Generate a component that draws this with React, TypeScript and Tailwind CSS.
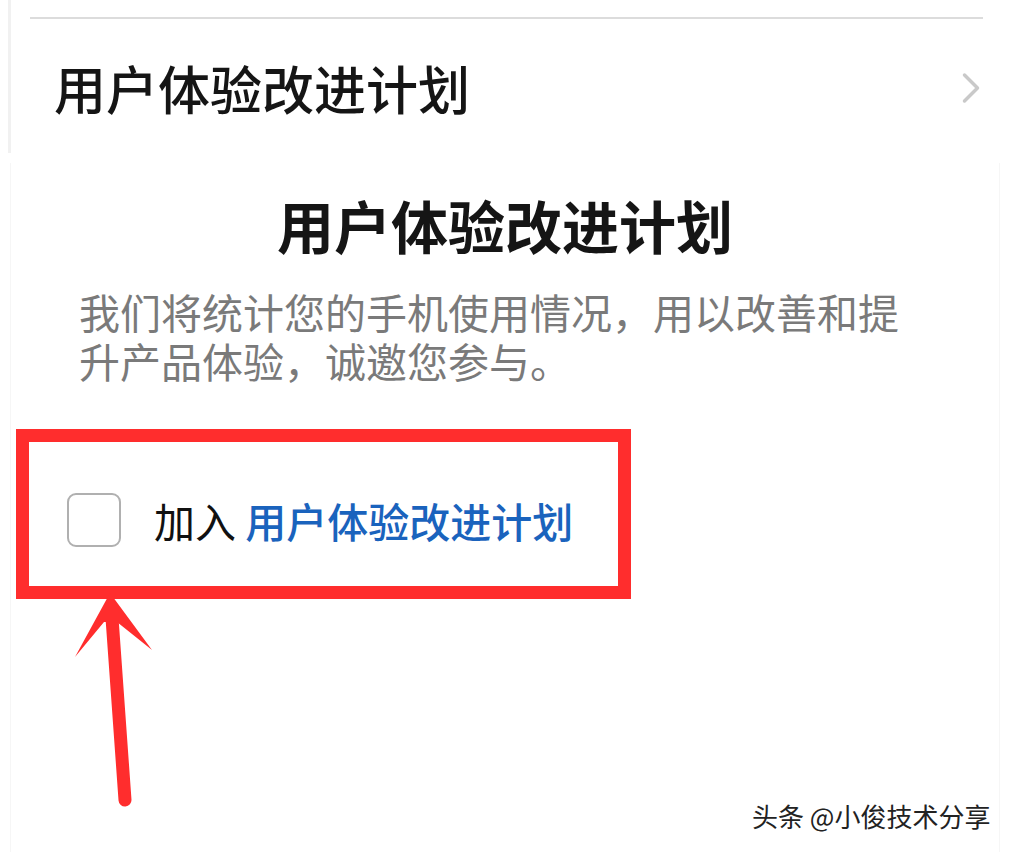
import { ChevronRight } from "lucide-react";

const FONT = "font-['Noto_Sans_CJK_SC','Noto_Sans',sans-serif]";

/* ================= ANNOTATION ARROW ================= */

function RedArrow() {
  return (
    <svg
      className="absolute left-0 top-0 pointer-events-none"
      width="1011"
      height="852"
      viewBox="0 0 1011 852"
    >
      <line
        x1="112"
        y1="618"
        x2="125"
        y2="800"
        stroke="#ff2d2d"
        strokeWidth="13"
        strokeLinecap="round"
      />
      <polygon
        points="110,593 152,650 117,622 104,622 75,657"
        fill="#ff2d2d"
      />
    </svg>
  );
}

export default function App() {
  return (
    <div className={`relative w-[1011px] h-[852px] overflow-hidden bg-white ${FONT}`}>
      {/* TOP LIST ROW */}
      <div className="h-[153px] ml-[8px] border-l-[3px] border-[#f1f1f1] pl-[19px] pr-[28px] pt-[17px]">
        <div className="h-[2px] bg-[#dcdcdc]" />
        <div className="mt-[41px] flex items-center justify-between">
          <span className="ml-[24px] text-[52px] leading-[56px] font-medium text-[#151515]">
            用户体验改进计划
          </span>
          <ChevronRight
            size={52}
            strokeWidth={1.6}
            className="-mr-[14px] text-[#c9c9c9]"
          />
        </div>
      </div>

      {/* DIALOG CARD */}
      <div className="mt-[10px] ml-[10px] mr-[11px] h-[689px] border-l border-r border-[#f6f6f6]">
        <h2 className="pt-[30px] text-center text-[57px] leading-[62px] font-bold text-[#151515]">
          用户体验改进计划
        </h2>

        <p className="mt-[32px] ml-[68px] mr-[90px] text-[41px] leading-[49px] text-[#7a7a7a]">
          我们将统计您的手机使用情况，用以改善和提升产品体验，诚邀您参与。
        </p>

        {/* HIGHLIGHTED CHECKBOX */}
        <div className="mt-[44px] ml-[5px] w-[615px] h-[170px] border-[13px] border-[#ff2d2d] flex items-center pt-[12px]">
          <div className="ml-[38px] w-[54px] h-[54px] rounded-[9px] border-2 border-[#b0b0b0] bg-white" />
          <span className="ml-[33px] text-[41px] leading-[48px] text-[#111]">
            加入 <span className="font-medium text-[#1a63bd]">用户体验改进计划</span>
          </span>
        </div>
      </div>

      <RedArrow />

      {/* WATERMARK */}
      <div className="absolute left-[752px] top-[799px] text-[26px] leading-[34px] text-[#222] [text-shadow:1px_1px_0_#fff,-1px_-1px_0_#fff]">
        头条 @小俊技术分享
      </div>
    </div>
  );
}
